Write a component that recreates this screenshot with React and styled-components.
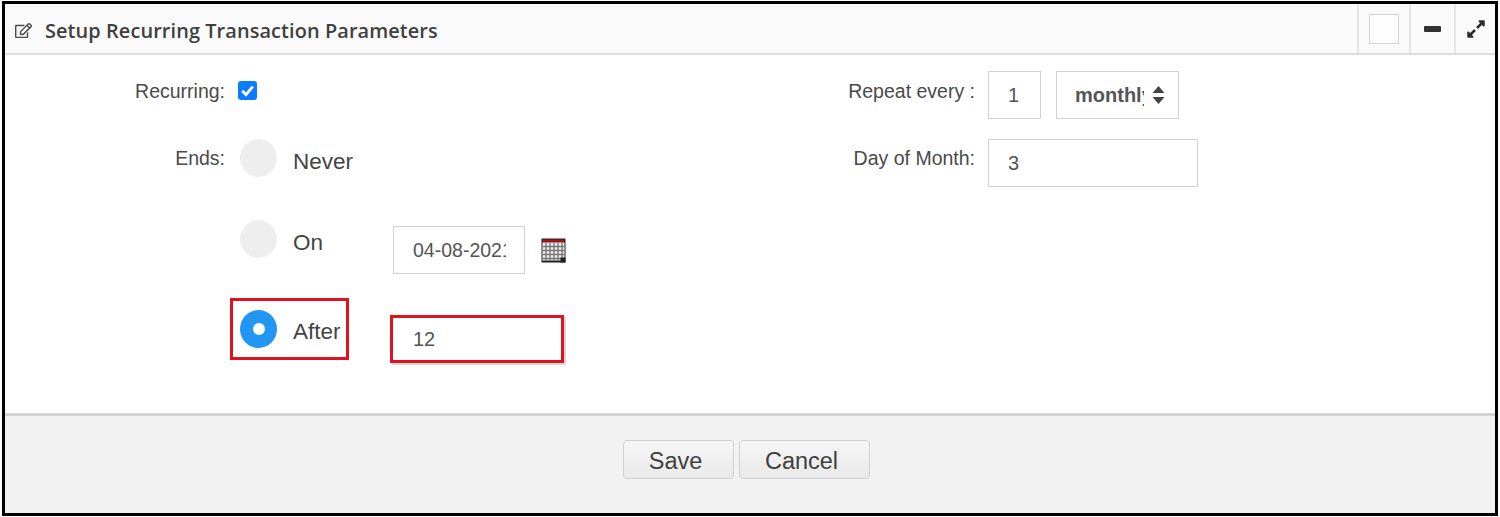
import React from "react";
import styled, { createGlobalStyle } from "styled-components";
import { FaRegEdit, FaExpandAlt } from "react-icons/fa";

const Global = createGlobalStyle`
  html, body { margin: 0; padding: 0; background: #fff; overflow: hidden; }
  * { box-sizing: border-box; }
`;

const Frame = styled.div`
  width: 1496px;
  height: 515px;
  margin: 1px 2px;
  border: 3px solid #000;
  display: flex;
  flex-direction: column;
  background: #fff;
  font-family: "Liberation Sans", Arial, sans-serif;
  color: #444;
`;

const Header = styled.header`
  height: 51px;
  flex: none;
  display: flex;
  align-items: stretch;
  background: #fafafa;
  border-bottom: 2px solid #dedede;
`;

const TitleWrap = styled.div`
  flex: 1;
  display: flex;
  align-items: center;
  padding: 4px 0 0 10px;
  gap: 13px;
  color: #4a4a4a;
`;

const Title = styled.h1`
  margin: 0;
  font-family: "Open Sans", sans-serif;
  font-size: 19.9px;
  font-weight: 600;
  color: #3f3f3f;
  letter-spacing: 0.1px;
`;

const HeaderCell = styled.div`
  width: ${(p) => p.$w}px;
  flex: none;
  display: flex;
  align-items: center;
  justify-content: center;
  border-left: 2px solid #e6e6e6;
  color: #2b2b2b;
`;

const Square = styled.div`
  width: 30px;
  height: 30px;
  background: #fdfdfd;
  border: 1px solid #d4d4d4;
`;

const Body = styled.main`
  flex: 1;
  display: grid;
  grid-template-columns: 783px 1fr;
`;

const Column = styled.div`
  display: flex;
  flex-direction: column;
`;

const Row = styled.div`
  height: ${(p) => p.$h}px;
  display: flex;
  align-items: flex-start;
`;

const Label = styled.label`
  width: ${(p) => p.$w}px;
  flex: none;
  text-align: right;
  font-size: 19.5px;
  line-height: 24px;
  margin-top: ${(p) => p.$top}px;
  color: #4a4a4a;
`;

const Check = styled.span`
  width: 19px;
  height: 19px;
  margin: 26px 0 0 13px;
  border-radius: 3px;
  background: #0a7cff;
  display: flex;
  align-items: center;
  justify-content: center;
`;

const RadioGroup = styled.div`
  display: flex;
  align-items: center;
  margin-left: ${(p) => p.$left}px;
`;

const Radio = styled.span`
  width: 37px;
  height: 38px;
  flex: none;
  border-radius: 50%;
  background: ${(p) => (p.$on ? "#2196f3" : "#eeeeee")};
  display: flex;
  align-items: center;
  justify-content: center;
  &::after {
    content: "";
    display: ${(p) => (p.$on ? "block" : "none")};
    width: 12px;
    height: 12px;
    border-radius: 50%;
    background: #fff;
  }
`;

const RadioText = styled.span`
  margin-left: 16px;
  padding-top: ${(p) => p.$drop}px;
  font-size: 22.5px;
  color: #444;
`;

const Field = styled.div`
  width: ${(p) => p.$w}px;
  height: 48px;
  flex: none;
  margin-left: ${(p) => p.$left || 0}px;
  margin-top: ${(p) => p.$top || 0}px;
  padding-left: ${(p) => p.$pad}px;
  display: flex;
  align-items: center;
  background: #fff;
  border: 1px solid #d2d2d2;
  font-size: 20px;
  color: #555;
  overflow: hidden;
  white-space: nowrap;
`;

const Clipped = styled.span`
  display: block;
  width: ${(p) => p.$w}px;
  overflow: hidden;
  flex: none;
  font-size: ${(p) => p.$size || 20}px;
  font-weight: ${(p) => p.$weight || 400};
`;

const Arrows = styled.svg`
  margin-left: 8px;
  flex: none;
`;

const Calendar = styled.svg`
  margin: 18px 0 0 16px;
  flex: none;
`;

const Marked = styled.div`
  width: 119px;
  height: 62px;
  margin-left: 225px;
  padding-left: 7px;
  border: 3px solid #e2111f;
  display: flex;
  align-items: center;
`;

const MarkedField = styled.div`
  width: 174px;
  height: 48px;
  flex: none;
  margin: 17px 0 0 41px;
  padding-left: 20px;
  display: flex;
  align-items: center;
  border: 3px solid #e2111f;
  box-shadow: 2px 2px 0 #d8d8d8;
  font-size: 20px;
  color: #555;
`;

const MinusBar = styled.span`
  display: block;
  width: 17px;
  height: 6px;
  border-radius: 1px;
  background: #333;
`;

const Footer = styled.footer`
  height: 100px;
  flex: none;
  display: flex;
  justify-content: center;
  gap: 5px;
  padding: 24px 8px 0 0;
  background-color: #f2f2f2;
  border-top: 3px solid #d4d4d4;
`;

const Button = styled.button`
  width: ${(p) => p.$w}px;
  height: 39px;
  padding: 3px 5px 0 0;
  border: 1px solid #cfcfcf;
  border-radius: 4px;
  background: linear-gradient(#f6f6f6, #e9e9e9);
  font-family: "Liberation Sans", Arial, sans-serif;
  font-size: 23.5px;
  color: #3f3f3f;
`;

export default function App() {
  return (
    <Frame>
      <Global />
      <Header>
        <TitleWrap>
          <FaRegEdit size={17} />
          <Title>Setup Recurring Transaction Parameters</Title>
        </TitleWrap>
        <HeaderCell $w={52}><Square /></HeaderCell>
        <HeaderCell $w={45}><MinusBar /></HeaderCell>
        <HeaderCell $w={41}><FaExpandAlt size={20} /></HeaderCell>
      </Header>
      <Body>
        <Column>
          <Row $h={84}>
            <Label $w={220} $top={24}>Recurring:</Label>
            <Check>
              <svg width="15" height="15" viewBox="0 0 15 15">
                <path d="M2.2 7.8 6 11.6 12.8 3.6" fill="none" stroke="#fff" strokeWidth="2.8" />
              </svg>
            </Check>
          </Row>
          <Row $h={81}>
            <Label $w={220} $top={7}>Ends:</Label>
            <RadioGroup $left={15}>
              <Radio />
              <RadioText $drop={8}>Never</RadioText>
            </RadioGroup>
          </Row>
          <Row $h={78}>
            <RadioGroup $left={235}>
              <Radio />
              <RadioText $drop={8}>On</RadioText>
            </RadioGroup>
            <Field $w={132} $pad={19} $left={70} $top={6}>
              <Clipped $w={93} $size={19.5}>04-08-2021</Clipped>
            </Field>
            <Calendar width="25" height="25" viewBox="0 0 25 25">
              <rect x="0.5" y="0.5" width="24" height="24" fill="#222" />
              <rect x="1.5" y="1.5" width="22" height="3" fill="#a31515" />
              <rect x="1.5" y="4.5" width="22" height="18" fill="#f2f2f2" />
              <path d="M5 5v18M9 5v18M13 5v18M17 5v18M21 5v18M2 8.5h21M2 12.5h21M2 16.5h21M2 20.5h21" stroke="#777" strokeWidth="1.4" />
              <rect x="19.5" y="19.5" width="5" height="5" fill="#222" />
            </Calendar>
          </Row>
          <Row $h={114}>
            <Marked>
              <Radio $on />
              <RadioText $drop={6}>After</RadioText>
            </Marked>
            <MarkedField>12</MarkedField>
          </Row>
        </Column>
        <Column>
          <Row $h={84}>
            <Label $w={187} $top={24}>Repeat every :</Label>
            <Field $w={53} $pad={19} $left={13} $top={16}>1</Field>
            <Field $w={123} $pad={18} $left={15} $top={16}>
              <Clipped $w={69} $weight={700}>monthly</Clipped>
              <Arrows width="13" height="22" viewBox="0 0 13 22">
                <path d="M6.5 2 12.5 9H.5zM6.5 20 .5 13h12z" fill="#444" />
              </Arrows>
            </Field>
          </Row>
          <Row $h={80}>
            <Label $w={187} $top={7}>Day of Month:</Label>
            <Field $w={210} $pad={19} $left={13}>3</Field>
          </Row>
        </Column>
      </Body>
      <Footer>
        <Button $w={111}>Save</Button>
        <Button $w={131}>Cancel</Button>
      </Footer>
    </Frame>
  );
}
